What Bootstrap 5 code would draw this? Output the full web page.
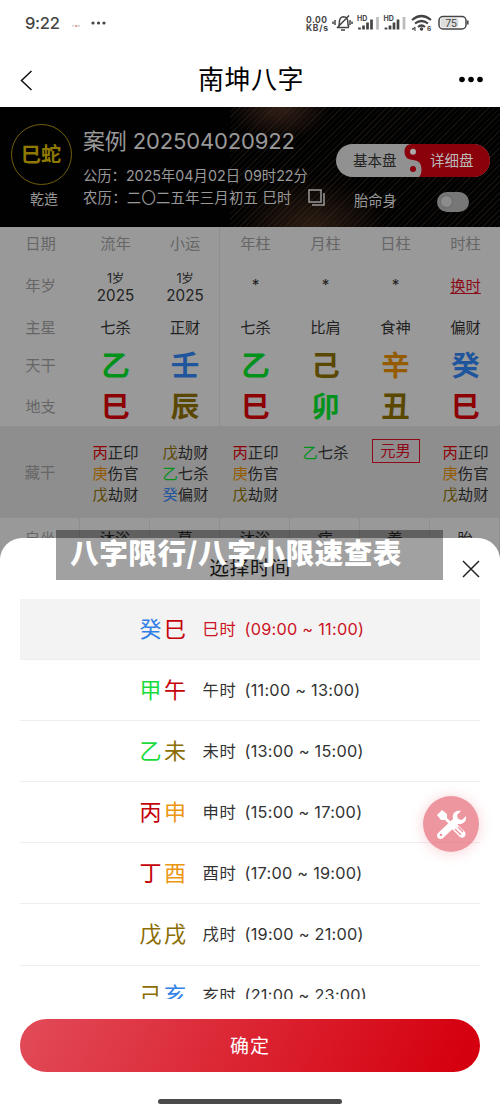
<!DOCTYPE html>
<html lang="zh-CN">
<head>
<meta charset="utf-8">
<meta name="viewport" content="width=device-width, initial-scale=1">
<title>南坤八字</title>
<link rel="stylesheet" href="https://cdn.jsdelivr.net/npm/bootstrap@5.3.0/dist/css/bootstrap.min.css">
<style>
:root{--g:#00921b;--r:#8d0004;--y:#5b4800;--o:#955b00;--b:#1f559d}
body{font-family:Inter,"Noto Sans CJK SC",sans-serif;width:500px;height:1111px;overflow:hidden;background:#fff;color:#222}
svg{display:block}
.status{height:46px;padding:0 31px 0 25px;color:#444}
.clock{font-size:16.5px;font-weight:500;letter-spacing:-.3px}
.title-bar{height:61px;padding:6px 17px 0 19px}
.title-bar h1{font-size:26px;letter-spacing:.5px;color:#000;font-weight:400}
.banner{height:120px;color:#999;background:
 radial-gradient(ellipse 50px 34px at 280px 0,rgba(75,47,35,.65),transparent),
 radial-gradient(ellipse 75px 48px at 312px 120px,rgba(70,45,30,.6),transparent),
 repeating-linear-gradient(135deg,transparent 0 3px,rgba(75,65,45,.26) 3px 4px) 100% 0/270px 100% no-repeat,#020101}
.zodiac{width:61px;height:61px;border:1px solid #70600c;color:#8f7900;font-size:20px;font-weight:700}
.who{width:83px;padding-top:17px;padding-right:1px}
.who small{font-size:14px;line-height:20px;margin-top:4px;padding-left:6px}
.info{padding-top:19px;width:253px;white-space:nowrap}
.case-name{font-size:22px;line-height:31px;letter-spacing:-.15px}
.case-line{font-size:14.3px;line-height:22px}
.tools{width:164px;padding-top:37px}
.pills{height:33px;width:154px}
.pills text{font-size:14.5px}
.switches{margin-top:12px}
.switch-dot{width:32px;height:20px;background:#777;padding:4px;margin-right:7px;margin-top:3px}
.switch-dot span{width:11px;height:11px;background:#8b8b8b;box-shadow:0 0 2px #555}
.chart{background:#999}
.chart-row{display:grid;grid-template-columns:80px repeat(6,70px);font-size:15.3px;color:#222;position:relative}
.chart-row>div{display:flex;align-items:center;justify-content:center;text-align:center;padding-top:2px;padding-left:1px}
.chart-row>div:nth-child(3){border-right:1px solid #8e8e8e}
.chart-row>div:first-child,.heads{color:#666}
.glyphs{font-weight:700;font-size:28.5px;line-height:38px}
.glyphs>div:first-child{font-size:15.3px;font-weight:400}
.years{font-size:15.2px;line-height:17px}
.years small{font-size:12.5px;line-height:17px;letter-spacing:-.3px}
.hidden-stems{background:#8e8e8e;line-height:21.2px}
.hidden-stems>div{align-items:flex-start!important;padding-top:16px}
.hidden-stems>div:nth-child(3){border:0}
.hidden-stems>div:first-child{align-items:center!important;padding:1px 0 0}
.male{border:1.5px solid #900818;color:#900818;width:48px;height:24px;line-height:21px;margin-top:-3px}
.seat>div{border-right:1px solid #8e8e8e}
.g{color:var(--g)}.r{color:var(--r)}.y{color:var(--y)}.o{color:var(--o)}.b{color:var(--b)}
.sheet{position:absolute;left:0;top:538px;width:500px;height:573px;background:#fff;border-radius:22px 22px 0 0;--g:#1adb3d;--r:#c50209;--y:#8b6d03;--o:#eb9611;--b:#327fe8}
.sheet-head{height:61px;font-size:19.8px;letter-spacing:.6px;padding-top:1px}
.sheet-close{position:absolute;right:20px;top:22px}
.hours{height:400px;overflow:hidden;margin:0 20px}
.hour{height:61.1px;border-bottom:1.5px solid #eee;font-size:16.3px;color:#333;padding-left:3px}
.hour .pillar{font-size:22px;letter-spacing:2.5px;width:63px}
.hour .branch{width:42px;letter-spacing:.6px}
.hour .span-time{width:119px;white-space:nowrap;letter-spacing:.25px}
.hour.active{background:#f3f3f3;color:#cb1324}
.confirm{height:53px;margin:20px 20px 0;border:0;border-radius:27px;background:linear-gradient(115deg,#e24b58,#d5000f 95%);color:#fff;font-size:19px;letter-spacing:1px;padding-top:5px}
.home-line{width:184px;height:5px;background:#4a4a4a;margin:27px auto 0}
.float-tool{position:absolute;left:423px;top:796px;width:56px;height:56px;background:rgba(231,110,123,.72);box-shadow:0 1px 14px rgba(231,90,105,.28)}
.caption-band{position:absolute;left:56px;top:530px;width:387px;height:50px;background:rgba(0,0,0,.37);color:#fff;font:900 28.7px/44px "Noto Sans CJK SC",sans-serif;letter-spacing:.45px;padding-left:14px;white-space:nowrap}
</style>
</head>
<body class="position-relative">
<header>
 <div class="status d-flex align-items-center justify-content-between">
  <div class="d-flex align-items-center"><span class="clock">9:22</span>
   <svg class="ms-2" width="42" height="10"><path d="M4 8h2M9 8h3" stroke="#bbb"/><path d="M7 8h2" stroke="#c44"/><g fill="#444"><circle cx="25" cy="5" r="1.6"/><circle cx="30.500" cy="5" r="1.600"/><circle cx="36" cy="5" r="1.600"/></g></svg></div>
  <svg width="164" height="20" viewBox="306 13 164 20" fill="none" stroke="#444" stroke-width="1.5">
   <g fill="#444" stroke="none" font-family="Inter" font-weight="700"><text x="307" y="22.500" font-size="8.500" textLength="21">0.00</text><text x="307" y="31" font-size="8.500" textLength="22">KB/s</text><text x="358" y="20.500" font-size="7">HD</text><text x="384.500" y="20.500" font-size="7">HD</text></g>
   <path d="M338 27.500h12M339.500 27q1-2 1-6 .3-4 4-4.300 4 .3 4.200 4.300 0 4 1.200 6M342 30h4M350 15.500 338 28M336 20v5M334 21.500v2.500M351 20v5M353 21.500v2.500"/>
   <g stroke-width="2.700"><path d="M360.500 29.500v-2M364.500 29.500v-4M368.500 29.500v-7M372.500 29.500v-10M387 29.500v-2M391 29.500v-4M395 29.500v-7M399 29.500v-10"/><path stroke="#bbb" d="M378.500 29.500V17M405 29.500V17"/></g>
   <path stroke-width="2.200" d="M413 20q9.500-8 19 0M416 23.500q6.500-5 13 0M419 27q3.500-3 7 0"/><circle cx="422.500" cy="29" r="1" fill="#444"/><path stroke-width="1" d="M413 29h3m0 2v-4l-3 2.500"/><text x="428" y="31" font-size="6.500" font-weight="700" fill="#444" stroke="none">6</text>
   <rect x="440" y="16.500" width="27" height="12.500" rx="4"/><rect x="441.500" y="18" width="18" height="9.500" rx="2" fill="#ddd" stroke="none"/><path d="M468.800 20.500v4"/><text x="446.500" y="26.500" font-size="10" font-family="Inter" fill="#444" stroke="none">75</text>
  </svg>
 </div>
 <div class="title-bar d-flex align-items-center justify-content-between">
  <svg width="24" height="24" fill="none" stroke="#111" stroke-width="1.500"><path d="m12.500 3-10 9.500 10 9.500"/></svg>
  <h1 class="m-0">南坤八字</h1>
  <svg width="24" height="10"><circle cx="3" cy="4.500" r="2.800"/><circle cx="12" cy="4.500" r="2.800"/><circle cx="21" cy="4.500" r="2.800"/></svg>
 </div>
</header>
<section class="banner d-flex">
 <div class="who d-flex flex-column align-items-center"><div class="zodiac rounded-circle d-flex align-items-center justify-content-center">巳蛇</div><small>乾造</small></div>
 <div class="info">
  <div class="case-name">案例 202504020922</div>
  <div class="case-line mt-2">公历：2025年04月02日 09时22分</div>
  <div class="case-line d-flex align-items-center"><span style="letter-spacing:.3px">农历：二〇二五年三月初五 巳时</span>
   <svg style="margin-left:16px" width="18" height="18" fill="none" stroke="#999" stroke-width="1.500"><rect x="1" y="1" width="12" height="12"/><path d="M4 16h12V4"/></svg></div>
 </div>
 <div class="tools">
  <svg class="pills" viewBox="0 0 154 33"><rect width="154" height="33" rx="16.500" fill="#919191"/><path d="M76 0H137.500a16.500 16.500 0 0 1 0 33H83q2.500-2.500 2.500-8 0-8.500-8.500-9-8.500-.5-8.500-8Q68.500 0 76 0Z" fill="#8a000b"/><circle cx="77" cy="7.700" r="3" fill="#aaa"/><circle cx="77" cy="25" r="3" fill="#8a000b"/><text x="17" y="21.500" fill="#222">基本盘</text><text x="94" y="21.500" fill="#bbb">详细盘</text></svg>
  <div class="switches d-flex align-items-center justify-content-between pe-4 ps-3"><span class="case-line ms-1" style="margin-left:2px!important">胎命身</span><div class="switch-dot rounded-pill"><span class="d-block rounded-circle"></span></div></div>
 </div>
</section>
<main class="chart">
 <div class="chart-row heads" style="height:33px"><div>日期</div><div>流年</div><div>小运</div><div>年柱</div><div>月柱</div><div>日柱</div><div>时柱</div></div>
 <div class="chart-row" style="height:50px"><div>年岁</div><div class="years"><span><small>1岁</small><br>2025</span></div><div class="years"><span><small>1岁</small><br>2025</span></div><div>*</div><div>*</div><div>*</div><div><u style="color:#8c0b19;text-underline-offset:2px">换时</u></div></div>
 <div class="chart-row" style="height:34px"><div>主星</div><div>七杀</div><div>正财</div><div>七杀</div><div>比肩</div><div>食神</div><div>偏财</div></div>
 <div class="chart-row glyphs" style="height:41px"><div>天干</div><div class="g">乙</div><div class="b">壬</div><div class="g">乙</div><div class="y">己</div><div class="o">辛</div><div class="b">癸</div></div>
 <div class="chart-row glyphs" style="height:41px"><div>地支</div><div class="r">巳</div><div class="y">辰</div><div class="r">巳</div><div class="g">卯</div><div class="y">丑</div><div class="r">巳</div></div>
 <div class="chart-row hidden-stems" style="height:92px"><div>藏干</div>
  <div><span><span class="r">丙</span>正印<br><span class="o">庚</span>伤官<br><span class="y">戊</span>劫财</span></div>
  <div><span><span class="y">戊</span>劫财<br><span class="g">乙</span>七杀<br><span class="b">癸</span>偏财</span></div>
  <div><span><span class="r">丙</span>正印<br><span class="o">庚</span>伤官<br><span class="y">戊</span>劫财</span></div>
  <div><span><span class="g">乙</span>七杀</span></div><div><span class="male">元男</span></div>
  <div><span><span class="r">丙</span>正印<br><span class="o">庚</span>伤官<br><span class="y">戊</span>劫财</span></div></div>
 <div class="chart-row seat" style="height:40px"><div>自坐</div><div>沐浴</div><div>墓</div><div>沐浴</div><div>病</div><div>养</div><div>胎</div></div>
</main>
<section class="sheet">
 <div class="sheet-head d-flex align-items-center justify-content-center">选择时间
  <svg class="sheet-close" width="18" height="18" stroke="#222" stroke-width="1.500"><path d="m1 1 16 16M17 1 1 17"/></svg></div>
 <div class="hours">
  <div class="hour active d-flex align-items-center justify-content-center"><span class="pillar"><span class="b">癸</span><span class="r">巳</span></span><span class="branch">巳时</span><span class="span-time">(09:00 ~ 11:00)</span></div>
  <div class="hour d-flex align-items-center justify-content-center"><span class="pillar"><span class="g">甲</span><span class="r">午</span></span><span class="branch">午时</span><span class="span-time">(11:00 ~ 13:00)</span></div>
  <div class="hour d-flex align-items-center justify-content-center"><span class="pillar"><span class="g">乙</span><span class="y">未</span></span><span class="branch">未时</span><span class="span-time">(13:00 ~ 15:00)</span></div>
  <div class="hour d-flex align-items-center justify-content-center"><span class="pillar"><span class="r">丙</span><span class="o">申</span></span><span class="branch">申时</span><span class="span-time">(15:00 ~ 17:00)</span></div>
  <div class="hour d-flex align-items-center justify-content-center"><span class="pillar"><span class="r">丁</span><span class="o">酉</span></span><span class="branch">酉时</span><span class="span-time">(17:00 ~ 19:00)</span></div>
  <div class="hour d-flex align-items-center justify-content-center"><span class="pillar"><span class="y">戊戌</span></span><span class="branch">戌时</span><span class="span-time">(19:00 ~ 21:00)</span></div>
  <div class="hour d-flex align-items-center justify-content-center"><span class="pillar"><span class="y">己</span><span class="b">亥</span></span><span class="branch">亥时</span><span class="span-time">(21:00 ~ 23:00)</span></div>
 </div>
 <button class="confirm d-block" style="width:460px">确定</button>
 <div class="home-line rounded-pill"></div>
</section>
<div class="float-tool rounded-circle d-flex align-items-center justify-content-center">
 <svg width="32" height="32" viewBox="0 0 32 32" fill="#fff"><path d="m2 7 5-5 5 4v4l4 4-2 2-4-4H6Z"/><path d="m3 25 15-14c-1-5 2-9 8-8l-4 4 1 4 4 1 4-4c1 5-3 9-8 8L8 30c-4 3-8-2-5-5Z"/><path d="m17 21 5-5 8 8c2 4-2 7-5 5Z"/><path d="m20 21 6 6M23 19l5 5" stroke="#ed929c" stroke-width="1.300"/><circle cx="6" cy="27" r="1.200" fill="#ed929c"/></svg>
</div>
<div class="caption-band">八字限行/八字小限速查表</div>
<script src="https://cdn.jsdelivr.net/npm/bootstrap@5.3.0/dist/js/bootstrap.bundle.min.js"></script>
</body>
</html>
